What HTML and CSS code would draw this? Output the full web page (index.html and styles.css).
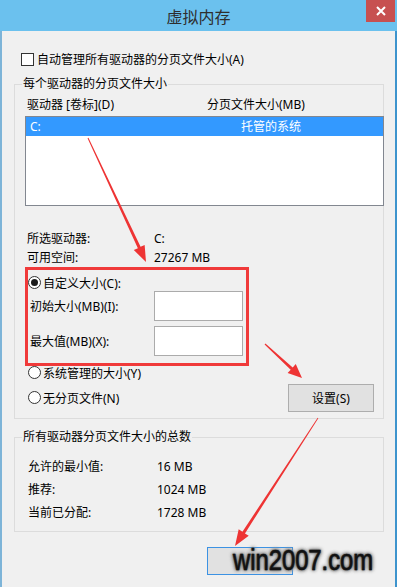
FILE: index.html
```html
<!DOCTYPE html>
<html lang="zh-CN">
<head>
<meta charset="utf-8">
<title>虚拟内存</title>
<link rel="stylesheet" href="styles.css">
</head>
<body>
<div class="page">
  <div class="window">
    <div class="titlebar">
      <div class="title">虚拟内存</div>
      <div class="close">
        <svg width="10" height="10" viewBox="0 0 10 10"><path d="M1 1L9 9M9 1L1 9" stroke="#fff" stroke-width="2" fill="none"/></svg>
      </div>
    </div>
    <div class="client">
      <div class="check-row"><span class="checkbox"></span><span>自动管理所有驱动器的分页文件大小(A)</span></div>

      <div class="group g1">
        <div class="legend">每个驱动器的分页文件大小</div>
        <div class="list-head"><span class="col1">驱动器 [卷标](D)</span><span>分页文件大小(MB)</span></div>
        <div class="listbox">
          <div class="list-row selected"><span class="col1">C:</span><span>托管的系统</span></div>
        </div>
        <div class="info">
          <div class="info-row"><span class="lbl">所选驱动器:</span><span>C:</span></div>
          <div class="info-row"><span class="lbl">可用空间:</span><span>27267 MB</span></div>
        </div>
        <div class="radio-row custom"><span class="radio checked"></span><span>自定义大小(C):</span></div>
        <div class="field-row"><span class="lbl">初始大小(MB)(I):</span><span class="input"></span></div>
        <div class="field-row"><span class="lbl">最大值(MB)(X):</span><span class="input"></span></div>
        <div class="bottom-row">
          <div class="radios">
            <div class="radio-row"><span class="radio"></span><span>系统管理的大小(Y)</span></div>
            <div class="radio-row"><span class="radio"></span><span>无分页文件(N)</span></div>
          </div>
          <button class="btn set">设置(S)</button>
        </div>
      </div>

      <div class="group g2">
        <div class="legend">所有驱动器分页文件大小的总数</div>
        <div class="totals">
          <div class="total-row"><span class="lbl">允许的最小值:</span><span>16 MB</span></div>
          <div class="total-row"><span class="lbl">推荐:</span><span>1024 MB</span></div>
          <div class="total-row"><span class="lbl">当前已分配:</span><span>1728 MB</span></div>
        </div>
      </div>

      <div class="footer"><button class="btn default" aria-label="确定"></button></div>
    </div>
  </div>

  <svg class="annot" width="399" height="587" viewBox="0 0 399 587">
    <rect x="26.5" y="268.5" width="221" height="96" fill="none" stroke="#f03a3a" stroke-width="3"/>
    <polygon fill="#ee3434" points="88.45,137.79 140.58,246.87 144.65,244.97 146,262 133.79,250.05 137.86,248.15 87.55,138.21"/>
    <polygon fill="#ee3434" points="265.41,343.56 292.70,367.43 295.75,364.11 302,378 287.63,372.95 290.68,369.63 264.59,344.44"/>
    <polygon fill="#ee3434" points="317.66,417.78 242.45,531.75 238.68,529.31 235,546 248.74,535.83 244.97,533.39 318.34,418.22"/>
  </svg>
  <div class="watermark">win2007.com</div>
</div>
</body>
</html>
```

FILE: styles.css
```css
html, body {
  margin: 0;
  padding: 0;
  background: #ffffff;
}
body {
  font-family: "Noto Sans", "Noto Sans CJK SC", sans-serif;
  font-size: 12px;
  color: #000;
}
.page {
  position: relative;
  width: 399px;
  height: 587px;
  overflow: hidden;
}
.window {
  width: 397px;
  height: 587px;
  display: flex;
  flex-direction: column;
}
.titlebar {
  height: 31px;
  flex: none;
  background: #6bc1ee;
  display: grid;
  grid-template-columns: 31px 1fr 31px;
}
.title {
  grid-column: 2;
  text-align: center;
  font-family: "Noto Sans CJK SC", sans-serif;
  font-size: 16px;
  line-height: 33px;
  height: 31px;
  color: #2e2e2e;
}
.close {
  grid-column: 3;
  width: 29px;
  height: 22px;
  background: #c75050;
  display: flex;
  align-items: center;
  justify-content: center;
}
.client {
  flex: 1;
  background: #f0f0f0;
  border-left: 2px solid #7db4d8;
  border-right: 2px solid #3d94cd;
  padding-top: 20px;
}
.check-row {
  display: flex;
  align-items: center;
  height: 16px;
  padding-left: 19px;
  gap: 3px;
}
.checkbox {
  width: 13px;
  height: 13px;
  box-sizing: border-box;
  border: 1px solid #333;
  background: #fff;
}
.group {
  margin-left: 12px;
  width: 370px;
  box-sizing: border-box;
  border: 1px solid #dcdcdc;
}
.g1 {
  margin-top: 17px;
  padding-bottom: 6px;
}
.g2 {
  margin-top: 18px;
  padding-bottom: 7px;
}
.legend {
  margin: -9px 0 0 7px;
  padding: 0 1px;
  width: fit-content;
  background: #f0f0f0;
  line-height: 16px;
  height: 16px;
}
.list-head {
  margin-top: 5px;
  display: flex;
  line-height: 16px;
  padding-left: 12px;
}
.list-head .col1 {
  width: 180px;
}
.listbox {
  margin: 3px 0 0 10px;
  width: 359px;
  height: 90px;
  box-sizing: border-box;
  border: 1px solid #828790;
  background: #fff;
}
.list-row {
  height: 19px;
  line-height: 19px;
  display: flex;
  padding-left: 4px;
}
.list-row.selected {
  background: #3399ff;
  color: #fff;
}
.list-row .col1 {
  width: 211px;
}
.info {
  margin-top: 23px;
  padding-left: 12px;
}
.info-row {
  display: flex;
  line-height: 19px;
}
.info .lbl {
  width: 127px;
}
.radio-row {
  display: flex;
  align-items: center;
  gap: 2px;
  height: 17px;
  padding-left: 13px;
}
.custom {
  margin-top: 7px;
}
.radio {
  width: 13px;
  height: 13px;
  box-sizing: border-box;
  border: 1px solid #333;
  border-radius: 50%;
  background: #fff;
  display: flex;
  align-items: center;
  justify-content: center;
}
.radio.checked::after {
  content: "";
  width: 7px;
  height: 7px;
  border-radius: 50%;
  background: #1a1a1a;
}
.field-row {
  display: flex;
  align-items: center;
  height: 30px;
  padding-left: 15px;
}
.field-row + .field-row {
  margin-top: 5px;
}
.field-row .lbl {
  width: 124px;
}
.input {
  width: 89px;
  height: 30px;
  box-sizing: border-box;
  border: 1px solid #ababab;
  background: #fff;
}
.bottom-row {
  margin-top: 8px;
  display: flex;
  justify-content: space-between;
  align-items: flex-start;
  padding-right: 9px;
}
.radios {
  display: flex;
  flex-direction: column;
  gap: 8px;
}
.btn {
  box-sizing: border-box;
  width: 86px;
  height: 28px;
  padding: 0;
  background: #e1e1e1;
  border: 1px solid #adadad;
  font: inherit;
  color: #000;
}
.btn.set {
  margin-top: 20px;
}
.btn.default {
  display: block;
  border-color: #3c92e3;
}
.totals {
  margin-top: 10px;
  padding-left: 13px;
}
.total-row {
  display: flex;
  line-height: 23px;
}
.total-row .lbl {
  width: 129px;
}
.footer {
  margin-top: 15px;
  padding-left: 205px;
}
.annot {
  position: absolute;
  left: 0;
  top: 0;
  pointer-events: none;
}
.watermark {
  position: absolute;
  left: 233px;
  top: 543px;
  font-family: "Liberation Sans", Arial, sans-serif;
  font-size: 29px;
  line-height: 34px;
  color: #111;
  white-space: nowrap;
  transform: scaleX(0.82);
  transform-origin: left top;
  -webkit-text-stroke: 0.6px #111;
  text-shadow: 0 0 1px #666, 0 0 2px #666, 0 0 3px #777, 0 0 4px #888, 0 0 5px #999, 0 0 6px #aaa;
}
```
